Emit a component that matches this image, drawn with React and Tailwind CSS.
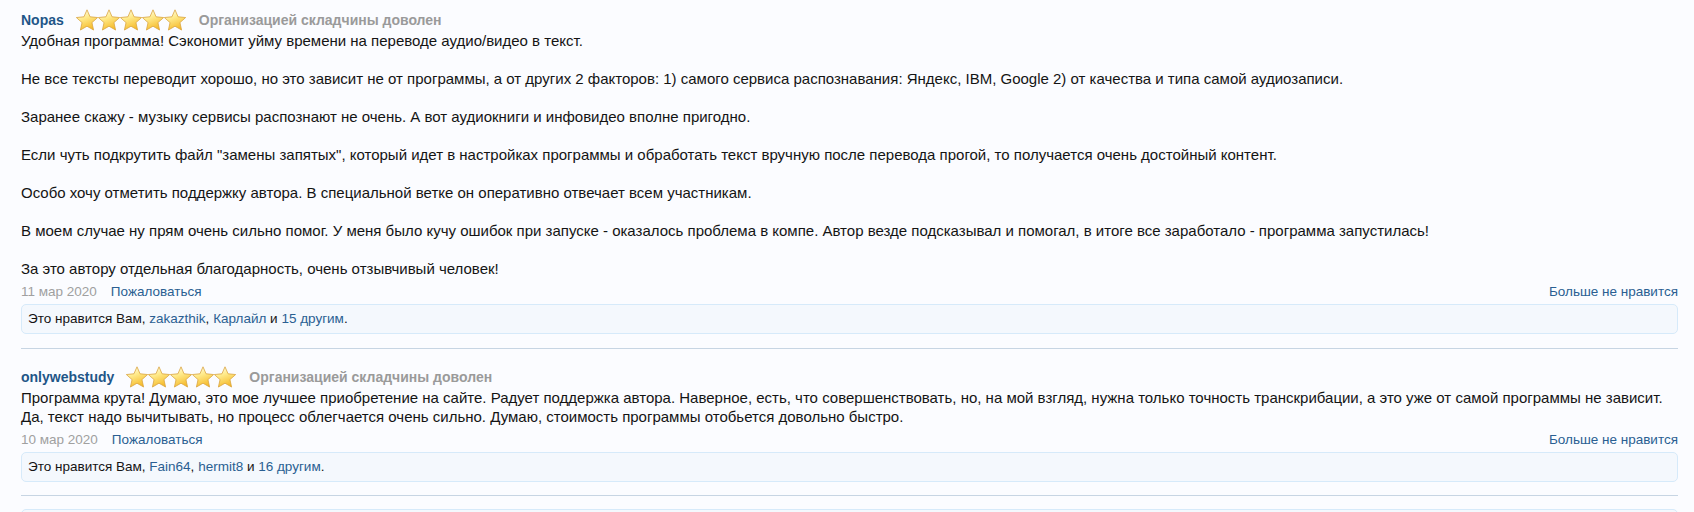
import React from "react";

function Star() {
  return (
    <svg width="22" height="22" viewBox="0 0 22 22" className="shrink-0 overflow-visible">
      <defs>
        <linearGradient id="sg" x1="0.2" y1="0" x2="0.6" y2="1">
          <stop offset="0" stopColor="#fffdf0" />
          <stop offset="0.4" stopColor="#ffeb8c" />
          <stop offset="1" stopColor="#f5b825" />
        </linearGradient>
      </defs>
      <polygon
        points="11,0.8 14.06,7.79 21.65,8.54 15.95,13.61 17.58,21.06 11,17.2 4.42,21.06 6.05,13.61 0.35,8.54 7.94,7.79"
        fill="url(#sg)"
        stroke="#d9a441"
        strokeWidth="0.8"
        strokeLinejoin="round"
      />
    </svg>
  );
}

function Stars() {
  return (
    <div className="flex">
      <Star />
      <Star />
      <Star />
      <Star />
      <Star />
    </div>
  );
}

function Link({ children }) {
  return <span className="text-[#2a5f92]">{children}</span>;
}

function Comment({ name, date, children, likes, first }) {
  return (
    <div className={first ? "pt-[9px] pb-[14px]" : "border-t border-[#c7d5e3] pt-[17px] pb-[13px]"}>
      <div className="flex items-center h-[22px] text-[14px]">
        <span className="font-bold text-[#1f5688]">{name}</span>
        <div className="ml-[12px]">
          <Stars />
        </div>
        <span className="ml-[13px] font-bold text-[#9a9a9a]">Организацией складчины доволен</span>
      </div>
      <div className="text-[15px] leading-[19px] text-[#141414]">{children}</div>
      <div className="flex justify-between mt-[4px] text-[13.5px] leading-[19px]">
        <div>
          <span className="text-[#a0a0a0]">{date}</span>
          <span className="ml-[14px] text-[#2a5f92]">Пожаловаться</span>
        </div>
        <span className="text-[#2a5f92]">Больше не нравится</span>
      </div>
      <div className="mt-[3px] border border-[#d6eafa] bg-[#f4f8fd] rounded-[5px] px-[6px] py-[5px] text-[13.5px] leading-[18px] text-[#141414]">
        {likes}
      </div>
    </div>
  );
}

export default function App() {
  return (
    <div
      className="bg-[#fbfcff] w-[1694px] h-[512px] overflow-hidden pl-[21px] pr-[16px]"
      style={{ fontFamily: '"Liberation Sans", Arial, sans-serif' }}
    >
      <Comment
        first
        name="Nopas"
        date="11 мар 2020"
        likes={
          <>
            Это нравится Вам, <Link>zakazthik</Link>, <Link>Карлайл</Link> и <Link>15 другим</Link>.
          </>
        }
      >
        Удобная программа! Сэкономит уйму времени на переводе аудио/видео в текст.
        <br />
        <br />
        Не все тексты переводит хорошо, но это зависит не от программы, а от других 2 факторов: 1) самого сервиса распознавания: Яндекс, IBM, Google 2) от качества и типа самой аудиозаписи.
        <br />
        <br />
        Заранее скажу - музыку сервисы распознают не очень. А вот аудиокниги и инфовидео вполне пригодно.
        <br />
        <br />
        Если чуть подкрутить файл "замены запятых", который идет в настройках программы и обработать текст вручную после перевода прогой, то получается очень достойный контент.
        <br />
        <br />
        Особо хочу отметить поддержку автора. В специальной ветке он оперативно отвечает всем участникам.
        <br />
        <br />
        В моем случае ну прям очень сильно помог. У меня было кучу ошибок при запуске - оказалось проблема в компе. Автор везде подсказывал и помогал, в итоге все заработало - программа запустилась!
        <br />
        <br />
        За это автору отдельная благодарность, очень отзывчивый человек!
      </Comment>
      <Comment
        name="onlywebstudy"
        date="10 мар 2020"
        likes={
          <>
            Это нравится Вам, <Link>Fain64</Link>, <Link>hermit8</Link> и <Link>16 другим</Link>.
          </>
        }
      >
        Программа крута! Думаю, это мое лучшее приобретение на сайте. Радует поддержка автора. Наверное, есть, что совершенствовать, но, на мой взгляд, нужна только точность транскрибации, а это уже от самой программы не зависит. Да, текст надо вычитывать, но процесс облегчается очень сильно. Думаю, стоимость программы отобьется довольно быстро.
      </Comment>
      <div className="border-t border-[#c7d5e3] pt-[13px]">
        <div className="border border-[#d6eafa] bg-[#f4f8fd] rounded-[5px] h-[40px]"></div>
      </div>
    </div>
  );
}
